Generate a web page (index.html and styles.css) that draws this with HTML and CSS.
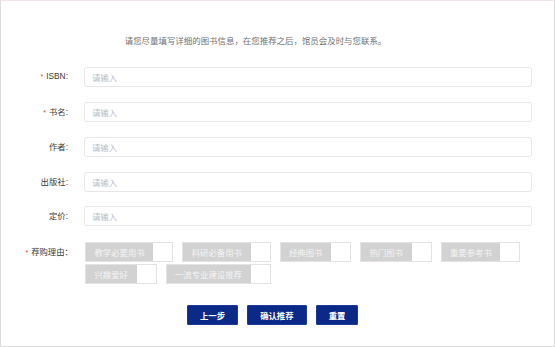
FILE: index.html
```html
<!DOCTYPE html>
<html lang="zh-CN">
<head>
<meta charset="utf-8">
<title>图书推荐</title>
<link rel="stylesheet" href="styles.css">
</head>
<body>
<div class="page">
  <p class="intro">请您尽量填写详细的图书信息，在您推荐之后，馆员会及时与您联系。</p>
  <form class="form">
    <div class="row">
      <label class="label"><span class="req">*</span>ISBN:</label>
      <input class="input" type="text" placeholder="请输入">
    </div>
    <div class="row">
      <label class="label"><span class="req">*</span>书名:</label>
      <input class="input" type="text" placeholder="请输入">
    </div>
    <div class="row">
      <label class="label">作者:</label>
      <input class="input" type="text" placeholder="请输入">
    </div>
    <div class="row">
      <label class="label">出版社:</label>
      <input class="input" type="text" placeholder="请输入">
    </div>
    <div class="row">
      <label class="label">定价:</label>
      <input class="input" type="text" placeholder="请输入">
    </div>
    <div class="row row-reason">
      <label class="label label-reason"><span class="req">*</span>荐购理由：</label>
      <div class="tags">
        <span class="tag"><span class="tag-text">教学必要用书</span><span class="tag-box"></span></span>
        <span class="tag"><span class="tag-text">科研必备用书</span><span class="tag-box"></span></span>
        <span class="tag"><span class="tag-text">经典图书</span><span class="tag-box"></span></span>
        <span class="tag"><span class="tag-text">热门图书</span><span class="tag-box"></span></span>
        <span class="tag"><span class="tag-text">重要参考书</span><span class="tag-box"></span></span>
        <span class="tag"><span class="tag-text">兴趣爱好</span><span class="tag-box"></span></span>
        <span class="tag"><span class="tag-text">一流专业建设推荐</span><span class="tag-box"></span></span>
      </div>
    </div>
    <div class="actions">
      <button class="btn" type="button">上一步</button>
      <button class="btn" type="button">确认推荐</button>
      <button class="btn" type="button">重置</button>
    </div>
  </form>
</div>
</body>
</html>
```

FILE: styles.css
```css
html, body {
  margin: 0;
  padding: 0;
  background: #fff;
}

body {
  font-family: "Liberation Sans", "Noto Sans CJK SC", sans-serif;
  font-size: 8.4px;
  color: #3a3a3a;
}

.page {
  box-sizing: border-box;
  width: 555px;
  height: 347px;
  border: 1px solid #dcdcdc;
  border-top-color: #f0e6e6;
  padding-top: 33px;
}

.intro {
  margin: 0;
  padding-right: 44px;
  text-align: center;
  font-family: "Noto Sans CJK SC", sans-serif;
  font-size: 8.45px;
  line-height: 12px;
  color: #707070;
}

.form {
  margin: 20px 0 0;
  display: flex;
  flex-direction: column;
  gap: 14.5px;
}

.row {
  display: grid;
  grid-template-columns: 67px 448px;
  column-gap: 16px;
  align-items: center;
}

.row-reason {
  align-items: start;
  margin-top: 1.5px;
}

.label {
  text-align: right;
  line-height: 20px;
  white-space: nowrap;
  color: #3a3a3a;
}

.label-reason {
  margin-right: -5px;
}

.req {
  color: #e8402f;
  margin-right: 3px;
  font-size: 7px;
}

.input {
  box-sizing: border-box;
  height: 20px;
  width: 448px;
  margin: 0;
  padding: 0 7px;
  border: 1px solid #e6e6e6;
  border-radius: 3px;
  background: #fff;
  font-family: "Noto Sans CJK SC", sans-serif;
  font-size: 8.4px;
  color: #333;
  outline: none;
}

.input::placeholder {
  color: #b9bcc4;
}

.tags {
  display: flex;
  flex-wrap: wrap;
  column-gap: 9px;
  row-gap: 2px;
  padding-left: 1px;
}

.tag {
  display: inline-flex;
  height: 20px;
  box-sizing: border-box;
  border: 1px solid #e3e3e3;
  background: #fff;
}

.tag-text {
  padding: 0 8.5px;
  background: #d2d2d2;
  color: #f4f4f4;
  line-height: 18px;
  font-family: "Noto Sans CJK SC", sans-serif;
  font-size: 8.4px;
  white-space: nowrap;
}

.tag-box {
  width: 19px;
  background: #fff;
}

.actions {
  display: flex;
  gap: 9px;
  padding-left: 186px;
  margin-top: 6px;
}

.btn {
  height: 20px;
  margin: 0;
  padding: 0 12px;
  border: 1px solid #1b3a9a;
  border-radius: 1px;
  background: #0b2a88;
  color: #fff;
  font-family: "Noto Sans CJK SC", sans-serif;
  font-size: 8.4px;
  font-weight: 700;
  line-height: 18px;
  cursor: pointer;
}
```
